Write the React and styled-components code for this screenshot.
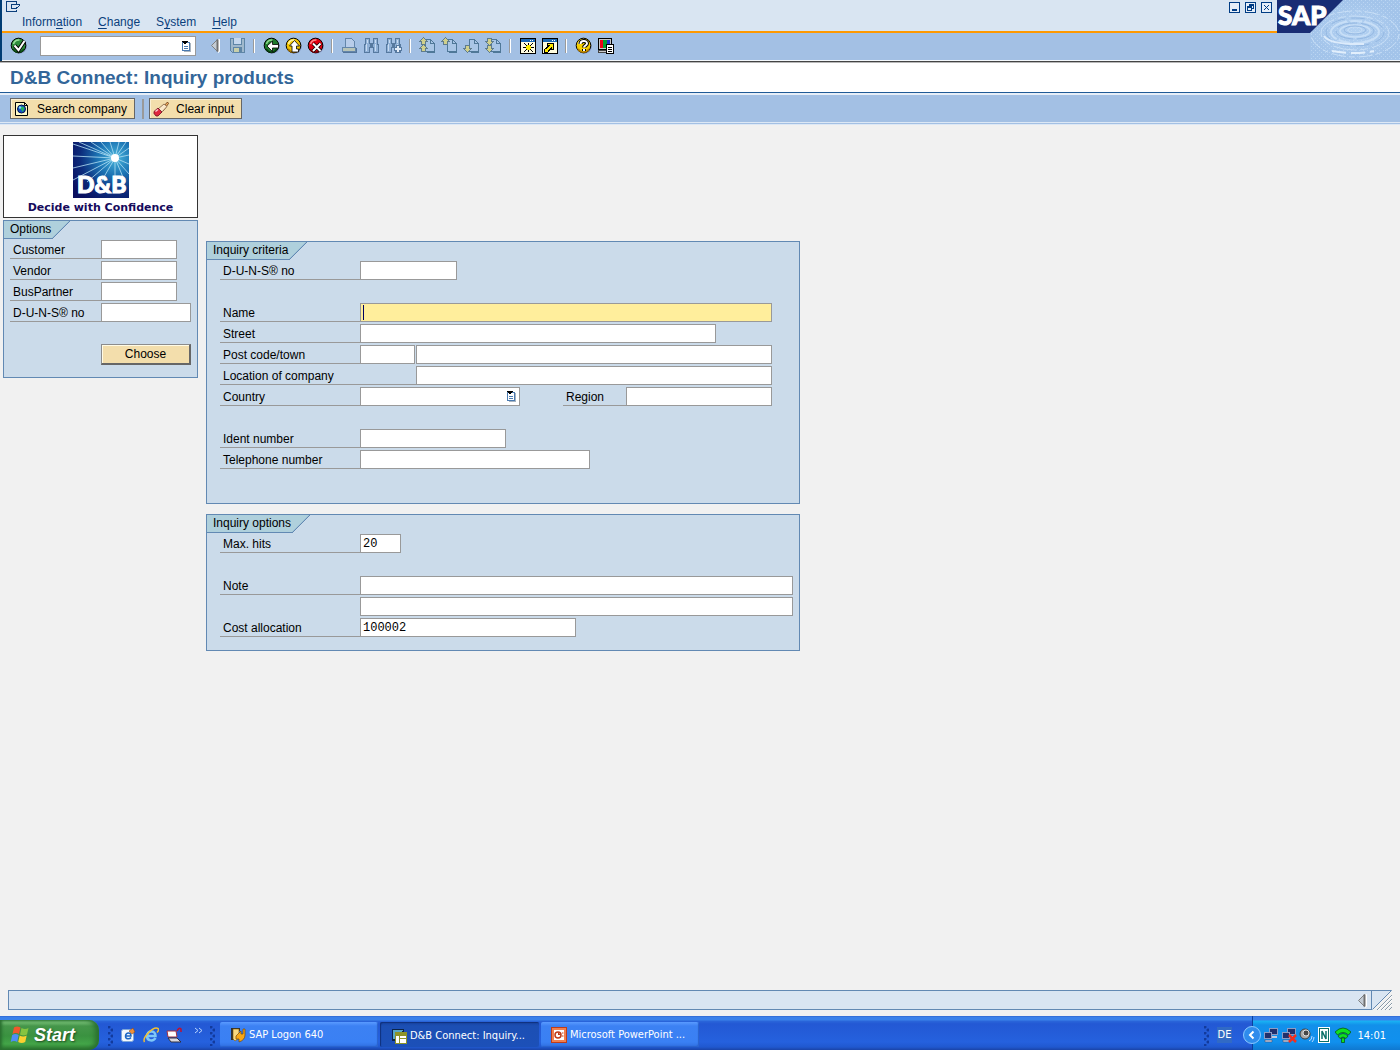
import React from 'react';
import styled, { createGlobalStyle } from 'styled-components';

const GlobalStyle = createGlobalStyle`
  * {
    box-sizing: border-box;
  }

  body {
    margin: 0;
    background-color: #f1f1f1;
  }

  body, button, input, select {
    font-family: "Liberation Sans", Arial, sans-serif;
    font-size: 12px;
    color: #000;
  }
`;

const Screen = styled.div`
  display: flex;
  flex-direction: column;
  min-height: 100vh;
`;

/* ---------- header ---------- */

const Header = styled.header`
  display: flex;
  background-color: #a3c0e4;
  border-bottom: 1px solid #444;
`;

const HeaderMain = styled.div`
  flex: 1;
  min-width: 0;
  border-left: 2px solid #003c74;
`;

const MenuArea = styled.div`
  display: flex;
  justify-content: space-between;
  height: 33px;
  background-color: #d9e5f2;
  border-bottom: 2px solid #ff9900;
`;

const SystemMenu = styled.button`
  display: block;
  margin: 1px 0 0 4px;
  padding: 0;
  border: none;
  background: none;
  height: 12px;

  svg {
    display: block;
  }
`;

const MenuList = styled.ul`
  display: flex;
  gap: 16px;
  list-style: none;
  margin: 1px 0 0;
  padding: 0 0 0 20px;
`;

const MenuLink = styled.a`
  color: #0b3f7c;
  text-decoration: none;
  line-height: 16px;

  u {
    text-underline-offset: 2px;
  }
`;

const WindowButtons = styled.div`
  display: flex;
  gap: 5px;
  padding: 2px 5px 0 0;
`;

const WindowButton = styled.button`
  width: 11px;
  height: 11px;
  padding: 0;
  border: 1px solid #003c84;
  background-color: #e6eef8;

  svg {
    display: block;
  }
`;

const Toolbar = styled.div`
  display: flex;
  align-items: center;
  height: 28px;
  padding: 0 0 2px 5px;
  border-bottom: 1px solid #f4f8fc;
`;

const ToolButton = styled.button`
  display: flex;
  justify-content: center;
  align-items: center;
  flex: none;
  width: 22px;
  height: 22px;
  padding: 0;
  border: none;
  background: none;
`;

const CommandField = styled.div`
  display: flex;
  align-items: center;
  width: 156px;
  height: 20px;
  margin: 0 8px 0 11px;
  background-color: #fff;
  border: 1px solid #999;

  input {
    flex: 1;
    min-width: 0;
    height: 18px;
    border: none;
    background: none;
    outline: none;
  }

  button {
    display: flex;
    padding: 0 3px 0 0;
    border: none;
    background: none;
  }
`;

const ToolDivider = styled.span`
  flex: none;
  width: 2px;
  height: 14px;
  margin: 0 5px;
  background-color: #fff;
  border-left: 1px solid #9a9a9a;
`;

const Brand = styled.div`
  flex: none;
  width: 123px;
  border-bottom: 1px solid #f4f8fc;

  svg {
    display: block;
  }
`;

/* ---------- title and application bar ---------- */

const Title = styled.h1`
  margin: 0;
  padding: 1px 10px 2px;
  height: 31px;
  background-color: #fff;
  border-top: 1px solid #b8b8b8;
  border-bottom: 1px solid #1f5a96;
  color: #336699;
  font-size: 19px;
  line-height: 28px;
`;

const ActionBar = styled.div`
  display: flex;
  align-items: center;
  height: 32px;
  padding: 0 10px;
  background-color: #a3c0e4;
  border-top: 2px solid #e6eef8;
  border-bottom: 3px double #dde8f5;
`;

const ActionButton = styled.button`
  display: flex;
  align-items: center;
  gap: 7px;
  height: 21px;
  padding: 0 7px 0 3px;
  background-color: #f3deac;
  border: 1px solid #666;
  box-shadow: inset 1px 1px 0 #fbf0d4;
`;

const ActionDivider = styled.span`
  width: 2px;
  height: 20px;
  margin: 0 5px 0 7px;
  background-color: #999;
`;

/* ---------- work area ---------- */

const WorkArea = styled.main`
  flex: 1;
  display: flex;
  align-items: flex-start;
  gap: 8px;
  padding: 10px 3px;
`;

const SideColumn = styled.div`
  flex: none;
  display: flex;
  flex-direction: column;
  gap: 2px;
  width: 195px;
`;

const FormColumn = styled.div`
  flex: 0 1 594px;
  min-width: 0;
  display: flex;
  flex-direction: column;
  gap: 10px;
  margin-top: 106px;
`;

const LogoCard = styled.div`
  padding: 6px 0 2px;
  background-color: #fff;
  border: 1px solid #333;
  text-align: center;

  svg {
    display: block;
    margin: 0 auto 3px;
  }
`;

const Slogan = styled.div`
  color: #160a5c;
  font-family: "DejaVu Sans", Verdana, sans-serif;
  font-size: 11px;
  font-weight: bold;
  line-height: 14px;
`;

const Panel = styled.section`
  background-color: #cbdbea;
  border: 1px solid #6289b3;
  padding-bottom: ${(props) => props.$bottom}px;
`;

const PanelTitle = styled.h2`
  position: relative;
  width: fit-content;
  height: 18px;
  margin: 0 0 1px;
  padding: 0 1px 0 6px;
  background-color: #afd0dc;
  border-bottom: 1px solid #6289b3;
  font-size: 12px;
  font-weight: normal;
  line-height: 17px;

  &:after {
    content: '';
    position: absolute;
    left: 100%;
    top: 0;
    width: 18px;
    height: 18px;
    background: linear-gradient(to bottom right, #afd0dc 47%, #6289b3 48%, #6289b3 51%, transparent 52%);
  }
`;

const Rows = styled.div`
  display: flex;
  flex-direction: column;
  gap: 2px;
  padding: 0 6px 0 ${(props) => props.$indent}px;
`;

const Row = styled.div`
  display: flex;
  height: 19px;
`;

const Label = styled.label`
  flex: none;
  width: ${(props) => props.$width}px;
  padding: 1px 0 0 3px;
  border-bottom: 1px solid #999;
  line-height: 18px;
  white-space: nowrap;
`;

const Gap = styled.span`
  flex: none;
  width: ${(props) => props.$width}px;
`;

const Field = styled.input`
  flex: 0 1 ${(props) => props.$width}px;
  width: ${(props) => props.$width}px;
  min-width: 0;
  height: 19px;
  padding: 0 2px;
  border: 1px solid #999;
  border-radius: 0;
  outline: none;
  background: #fff;
  font-family: "Liberation Mono", "Courier New", monospace;
`;

const ActiveField = styled(Field)`
  background: linear-gradient(#000060, #000060) 2px 1px / 1px 15px no-repeat, #ffee9c;
`;

const SelectBox = styled.div`
  position: relative;
  flex: 0 1 160px;
  min-width: 0;

  select {
    display: block;
    width: 100%;
    height: 19px;
    appearance: none;
    background-color: #fff;
    border: 1px solid #999;
    border-radius: 0;
    outline: none;
  }

  svg {
    position: absolute;
    top: 3px;
    right: 3px;
    pointer-events: none;
  }
`;

const ChooseButton = styled.button`
  display: block;
  width: 90px;
  height: 21px;
  margin: 22px 6px 0 auto;
  padding: 0;
  background-color: #f3deac;
  border: 1px solid #8c8c8c;
  border-right: 2px solid #666;
  border-bottom: 2px solid #666;
  box-shadow: inset 1px 1px 0 #fffbe6;
`;

/* ---------- status bar ---------- */

const StatusBar = styled.footer`
  display: flex;
  height: 20px;
  margin: 0 8px 6px;
`;

const StatusText = styled.div`
  flex: 1;
  display: flex;
  justify-content: flex-end;
  align-items: center;
  background-color: #d9e5f2;
  border: 1px solid #6289b3;
`;

/* ---------- taskbar ---------- */

const Taskbar = styled.nav`
  display: flex;
  height: 34px;
  background: linear-gradient(#2d60c8 0, #3b80ea 1px, #3b82ea 4px, #2a66da 5px, #2358d4 8px, #2561de 26px, #2058cf 31px, #1a44a8 34px);
  font-family: "DejaVu Sans Condensed", Tahoma, sans-serif;
  font-size: 11px;
  color: #fff;
`;

const StartButton = styled.button`
  display: flex;
  align-items: center;
  gap: 4px;
  width: 99px;
  height: 30px;
  margin-top: 4px;
  padding: 0 0 0 10px;
  border: none;
  border-radius: 0 10px 10px 0;
  background: linear-gradient(#5fae60 0, #7cc47c 2px, #45964a 6px, #3a9240 16px, #43a548 24px, #2c7430 30px);
  box-shadow: inset -4px 0 5px #2a7030, inset 2px 0 3px #2a7030;
  color: #fff;
  font-size: 18px;
  font-weight: bold;
  font-style: italic;
  text-shadow: 1px 1px 2px #1d4d20;
`;

const Grip = styled.span`
  flex: none;
  width: 5px;
  height: 20px;
  margin: 10px 0 0 ${(props) => props.$left}px;
  background:
    radial-gradient(circle at 1px 1px, #123a9c 1px, transparent 2px) 0 0 / 5px 6px,
    radial-gradient(circle at 4px 4px, #123a9c 1px, transparent 2px) 0 0 / 5px 6px;
`;

const QuickLaunch = styled.div`
  display: flex;
  align-items: center;
  gap: 7px;
  padding: 4px 0 0 7px;
`;

const QuickButton = styled.button`
  display: flex;
  padding: 0;
  border: none;
  background: none;
`;

const More = styled.button`
  align-self: flex-start;
  width: 12px;
  margin: 4px 0 0 4px;
  padding: 0;
  border: none;
  background: none;
`;

const Tasks = styled.div`
  display: flex;
  flex: 0 1 484px;
  min-width: 0;
  gap: 2px;
  padding: 6px 0 3px 5px;
`;

const Task = styled.button`
  flex: 1;
  min-width: 0;
  display: flex;
  align-items: center;
  gap: 3px;
  padding: ${(props) => (props.$active ? '2px 10px 0 11px' : '0 10px')};
  border: none;
  border-radius: 2px;
  background: ${(props) => (props.$active
    ? 'linear-gradient(#1743a0, #1c4fb4 4px, #1c50b8)'
    : 'linear-gradient(#5a9bff, #3c81f3 4px, #3a80f4 20px, #2f6fe0)')};
  box-shadow: ${(props) => (props.$active ? 'inset 1px 1px 1px #10307c' : 'inset -1px -1px 1px #2a62cc')};
  color: #fff;
  font-family: inherit;
  font-size: 11px;
  white-space: nowrap;
`;

const TaskbarEnd = styled.div`
  display: flex;
  margin-left: auto;
`;

const Language = styled.span`
  align-self: center;
  margin: 4px 12px 0 8px;
  padding: 0 1px;
  background-color: #316ac5;
  line-height: 16px;
`;

const Tray = styled.div`
  display: flex;
  align-items: center;
  gap: 2px;
  margin-left: 8px;
  padding: 4px 14px 0 0;
  background: linear-gradient(#2d60c8 0, #3b80ea 1px, #3b82ea 4px, #19b3f3 5px, #1290ea 9px, #1090ee 26px, #0f78d0 34px);
  border-left: 1px solid #0c3f9c;
`;

const TrayToggle = styled.button`
  display: flex;
  margin-left: -10px;
  padding: 0;
  border: none;
  background: none;
`;

const Clock = styled.time`
  margin-left: 4px;
`;

/* ---------- icons ---------- */

const Icon = ({ size = 17, children, ...rest }) => (
  <svg width={size} height={size} viewBox={`0 0 ${size} ${size}`} fill="none" {...rest}>
    {children}
  </svg>
);

const ListIcon = () => (
  <svg width="11" height="12" viewBox="0 0 11 12" shapeRendering="crispEdges">
    <path d="M3 11h6V3h1v9H3z" fill="#a8b4c0" />
    <rect x="1" y="2" width="8" height="9" fill="#4a7ab0" />
    <rect x="2" y="3" width="6" height="7" fill="#fff" />
    <path d="M3 6h4v1H3zM3 8h4v1H3z" fill="#4a7ab0" />
    <path d="M1 1h6v1H6v1H5v1H3V3H2V2H1z" fill="#000" />
  </svg>
);

const Ball = ({ color, light, dark, children }) => (
  <Icon>
    <circle cx="9.500" cy="9.500" r="7.200" fill="#7f8fc0" />
    <circle cx="8.500" cy="8.500" r="7.300" fill={color} stroke="#000" />
    <path d="M3 12a6.500 6.500 0 0 0 11 0" stroke={dark} strokeWidth="1.500" />
    <path d="M3.500 7a5.500 5.500 0 0 1 6-4" stroke={light} strokeWidth="1.500" />
    {children}
  </Icon>
);

const CheckIcon = () => (
  <Ball color="#2e8e3c" light="#9be09b" dark="#0c4c14">
    <path d="M4.500 8.500l4 4.500 6-9" stroke="#000" strokeWidth="4" />
    <path d="M4.500 8.500l4 4.500 6-9" stroke="#fff" strokeWidth="2" />
  </Ball>
);

const BackIcon = () => (
  <Ball color="#1f7a2c" light="#8ed88e" dark="#083c10">
    <path d="M4 9l5.500-5v3.500h6v3.500h-6v3.500z" fill="#fff" stroke="#000" strokeWidth=".8" />
  </Ball>
);

const ExitIcon = () => (
  <Ball color="#f2c400" light="#fff6a0" dark="#a87400">
    <path d="M9.500 3.500l5 5.500h-3v3h2v3H7v-6H4.500z" fill="#fff" stroke="#000" strokeWidth=".8" />
  </Ball>
);

const CancelIcon = () => (
  <Ball color="#e00010" light="#ff8c8c" dark="#800008">
    <path d="M6 6.500l7.500 7.500M13.500 6.500L6 14" stroke="#000" strokeWidth="3.500" />
    <path d="M6 6.500l7.500 7.500M13.500 6.500L6 14" stroke="#fff" strokeWidth="2" />
  </Ball>
);

const HelpIcon = () => (
  <Ball color="#f6d000" light="#fffac0" dark="#b88000">
    <path d="M5.500 7c0-4 6.500-4 6.500-.5 0 2-3 2-3 4M9 12v2" stroke="#000" strokeWidth="4" />
    <path d="M5.500 7c0-4 6.500-4 6.500-.5 0 2-3 2-3 4M9 12v2" stroke="#fff" strokeWidth="2" />
  </Ball>
);

const TriangleIcon = () => (
  <Icon>
    <path d="M11.500 2.500v13l1-1v-12z" fill="#fff" stroke="#fff" />
    <path d="M4.500 8.500l6-6v12z" fill="#c4ccd4" stroke="#808080" />
    <path d="M10.500 2.500v12" stroke="#707070" strokeWidth="2" />
  </Icon>
);

const SaveIcon = () => (
  <Icon shapeRendering="crispEdges">
    <path d="M2 3h14v13H3z" fill="#c7d6e8" />
    <path d="M1 1h15v15H3l-2-2z" fill="#5e85a6" />
    <path d="M2 2h2v6h9V2h2v13H3l-1-1z" fill="#9fb8cc" />
    <rect x="5" y="1" width="7" height="6" fill="#c5d8ee" />
    <rect x="4" y="10" width="9" height="5" fill="#5e85a6" />
    <rect x="5" y="11" width="5" height="4" fill="#c8cfaa" />
  </Icon>
);

const PrintIcon = () => (
  <Icon shapeRendering="crispEdges">
    <path d="M4.500 10.500v-9h6l3 3v6z" fill="#b8cdea" stroke="#6486aa" />
    <path d="M1.500 10.500h13v4h-13z" fill="#b8c4b8" stroke="#6486aa" />
    <path d="M2 15.500h13V11" stroke="#53749a" />
  </Icon>
);

const Binoculars = ({ plus }) => (
  <Icon shapeRendering="crispEdges">
    <path d="M2.500 1.500h4v5h4v-5h4v5l1 2v7h-5v-5h-4v5h-5v-7l1-2z" fill="#8fb0d6" stroke="#56799f" />
    <path d="M3 7h1v7H3zM12 7h1v7h-1zM4 3h1v3H4zM12 3h1v3h-1z" fill="#c8dcf2" />
    <path d="M7 7h3v3H7z" fill="#56799f" />
    {plus && <path d="M11.500 8.500h3v2h2v3h-2v2h-3v-2h-2v-3h2z" fill="#e2ecf8" stroke="#56799f" />}
  </Icon>
);

const PageIcon = ({ up, down, double }) => (
  <Icon shapeRendering="crispEdges">
    <path d="M6.500 2.500h5l4 4v8h-9z" fill="#a9c6e6" stroke="#4f7898" />
    <path d="M11.500 2.500v4h4M8 15.500h8" stroke="#4f7898" />
    {up && <path d="M4.500 .5l4 4h-2v3h-4v-3h-2z" fill="#d0d08c" stroke="#5f7c8c" />}
    {up && double && <path d="M4.500 7.500l4 4h-2v3h-4v-3h-2z" fill="#d0d08c" stroke="#5f7c8c" />}
    {down && <path d="M2.500 8.500h4v3h2l-4 4-4-4h2z" fill="#d0d08c" stroke="#5f7c8c" />}
    {down && double && <path d="M2.500 1.500h4v3h2l-4 4-4-4h2z" fill="#d0d08c" stroke="#5f7c8c" />}
  </Icon>
);

const WindowFrame = ({ children }) => (
  <Icon shapeRendering="crispEdges">
    <rect x="1" y="1" width="16" height="16" fill="#000" />
    <rect x="2" y="2" width="14" height="3" fill="#1c69b4" />
    <path d="M11 3h1v1h-1zM13 3h1v1h-1z" fill="#fff" />
    <rect x="2" y="5" width="14" height="11" fill="#fffde0" />
    {children}
  </Icon>
);

const SessionIcon = () => (
  <WindowFrame>
    <path d="M9.500 6v9M4 10.500h11M5 6l9 9M14 6l-9 9" stroke="#000" />
    <path d="M8 8h3v5H8zM7 9h5v3H7z" fill="#ffee00" />
  </WindowFrame>
);

const ShortcutIcon = () => (
  <WindowFrame>
    <path d="M3.500 15.500v-3l5-4h-2v-2h6v6h-2v-2l-4 5z" fill="#ffe800" stroke="#000" />
  </WindowFrame>
);

const LayoutIcon = () => (
  <Icon shapeRendering="crispEdges">
    <rect x="1" y="1" width="14" height="12" fill="#000" />
    <rect x="2" y="2" width="12" height="10" fill="#c8c8c8" />
    <rect x="3" y="3" width="3" height="8" fill="#f00018" />
    <rect x="6" y="3" width="4" height="8" fill="#00a030" />
    <rect x="10" y="3" width="3" height="8" fill="#2030d0" />
    <path d="M1 13h14v3H1z" fill="#444" />
    <path d="M2 14h8v1H2z" fill="#ccc" />
    <rect x="9" y="7" width="8" height="10" fill="#000" />
    <rect x="10" y="8" width="6" height="8" fill="#fff" />
    <path d="M11 10.500h4M11 12.500h4M11 14.500h4" stroke="#000" />
  </Icon>
);

const SearchCompanyIcon = () => (
  <Icon size={16}>
    <path d="M1.500 1.500h9l3 3v10h-12z" fill="#fffbc8" stroke="#000" />
    <path d="M10.500 1.500v3h3" stroke="#000" />
    <circle cx="7.500" cy="8" r="4" fill="#1550c8" stroke="#001050" />
    <path d="M7 5.500l3 .5.500 2-2 3-1-2-1-1z" fill="#20b060" />
    <circle cx="6" cy="6.500" r="1.200" fill="#7fe0ff" />
  </Icon>
);

const EraserIcon = () => (
  <Icon size={16}>
    <path d="M9 7l5.500-6 1 1.500L10 10z" fill="#f8b060" stroke="#5a3010" strokeWidth=".8" />
    <path d="M5 8l6-5 3 2.500L8 12z" fill="#fbe8c8" stroke="#806040" strokeWidth=".8" />
    <path d="M1 10.500l4-3.500L9 11l-4 4H3L1 12.500z" fill="#e02840" stroke="#701020" strokeWidth=".8" />
    <path d="M2.500 10.500L5 8.500" stroke="#ffd0d8" strokeWidth="1.500" />
  </Icon>
);

const BrandArt = () => (
  <svg width="123" height="60" viewBox="0 0 123 60">
    <defs>
      <pattern id="grain" width="4" height="4" patternUnits="userSpaceOnUse">
        <rect width="1" height="1" fill="#c4dcf6" />
        <rect x="2" y="2" width="1" height="1" fill="#c4dcf6" />
      </pattern>
      <radialGradient id="pool">
        <stop offset="0" stopColor="#b4d2f2" />
        <stop offset="1" stopColor="#a3c4ea" />
      </radialGradient>
    </defs>
    <path d="M66 0h57v60H33V33z" fill="url(#pool)" />
    <path d="M66 0h57v60H33V33z" fill="url(#grain)" opacity=".7" />
    <g fill="none" stroke="#c8dff7">
      <ellipse cx="78" cy="30" rx="7" ry="3" />
      <ellipse cx="78" cy="31" rx="15" ry="6" strokeWidth="1.500" />
      <ellipse cx="78" cy="32" rx="24" ry="11" strokeWidth="2" strokeDasharray="30 3 12 2" />
      <ellipse cx="78" cy="33" rx="34" ry="17" strokeDasharray="24 4 8 3" />
      <ellipse cx="78" cy="34" rx="44" ry="23" strokeDasharray="6 3 14 4" />
    </g>
    <g fill="none" stroke="#94b8e2">
      <ellipse cx="78" cy="30" rx="11" ry="4" />
      <ellipse cx="78" cy="31" rx="19" ry="8" strokeDasharray="20 4" />
      <ellipse cx="78" cy="32" rx="29" ry="14" strokeDasharray="14 6" />
    </g>
    <path d="M47 36q6 9 40 8" stroke="#dcebfb" strokeWidth="2" fill="none" />
    <path d="M55 51q22 4 42 0" stroke="#e2effc" strokeWidth="2" fill="none" strokeDasharray="14 5" />
    <path d="M0 0h66L33 33H0z" fill="#182c74" />
    <text x="1" y="25" fill="#fff" stroke="#fff" strokeWidth="1" fontFamily="Lato, Liberation Sans, sans-serif" fontSize="26" fontWeight="900">SAP</text>
  </svg>
);

const rays = [
  [0, 2], [0, 14], [0, 26], [0, 38], [6, 0], [18, 0], [28, 0], [37, 0], [46, 0], [53, 0],
  [56, 6], [56, 13], [56, 22], [56, 32], [14, 40], [28, 40], [42, 40], [52, 40],
];

const CompanyLogo = () => (
  <svg width="56" height="56" viewBox="0 0 56 56">
    <defs>
      <radialGradient id="glow" cx=".76" cy=".28" r=".9">
        <stop offset="0" stopColor="#4ab6dc" />
        <stop offset=".35" stopColor="#1c74b4" />
        <stop offset=".7" stopColor="#0c2c7c" />
        <stop offset="1" stopColor="#0a1060" />
      </radialGradient>
    </defs>
    <rect width="56" height="56" fill="url(#glow)" />
    {rays.map(([x, y]) => (
      <path key={`${x}-${y}`} d={`M42 16L${x} ${y}`} stroke="#b4e0f4" strokeWidth=".8" />
    ))}
    <circle cx="42" cy="16" r="4" fill="#fff" />
    <text x="4" y="51" fill="#fff" stroke="#fff" fontFamily="Lato, Liberation Sans, sans-serif" fontSize="23" fontWeight="900">D&amp;B</text>
  </svg>
);

const StatusGrip = () => (
  <svg width="20" height="20" viewBox="0 0 20 20">
    <path d="M0 0h19L1 19H0z" fill="#d9e5f2" />
    <path d="M0 .5h19.500M.5 19.500L19.500 .5" stroke="#6289b3" fill="none" />
    <path d="M5 20L20 5M9 20L20 9M13 20l7-7M17 20l3-3" stroke="#8a9aa8" />
    <path d="M6 20L20 6M10 20L20 10M14 20l6-6" stroke="#fff" />
  </svg>
);

const WindowsFlag = () => (
  <svg width="20" height="20" viewBox="0 0 20 20">
    <path d="M4 2.500q3-2 6.500 0L9 9q-3-2-6.500 0z" fill="#f0582c" />
    <path d="M11.500 3q3.500 2 7 0L17 9.500q-3.500 2-7 0z" fill="#86c440" />
    <path d="M2.200 10q3-2 6.500 0L7.200 17q-3-2-6.500 0z" fill="#4f8ef4" />
    <path d="M9.700 10.500q3.500 2 7 0L15.200 17q-3.500 2-7 0z" fill="#fbd030" />
  </svg>
);

const OutlookIcon = () => (
  <Icon size={16}>
    <rect x="1.500" y="2.500" width="12" height="12" rx="2" fill="#f4f8fc" stroke="#7fa6d8" />
    <path d="M5 9h6c0-4-5-4-5.500 0 0 3.500 4 3.500 5.500 1.500" stroke="#1c66c4" strokeWidth="1.500" />
    <path d="M9 4l4-3 2 4-3 2z" fill="#f09038" stroke="#803c10" strokeWidth=".5" />
  </Icon>
);

const ExplorerIcon = () => (
  <Icon size={16}>
    <path d="M4 9h8.500c0-6-8-6-8.500 0 0 5.500 6.500 5.500 8.500 2" stroke="#7fc8f8" strokeWidth="2.500" />
    <path d="M1.500 15C-1 11 10-1 15 1.500c1 1 0 3-1 4" stroke="#f4c030" strokeWidth="1.500" />
  </Icon>
);

const DesktopIcon = () => (
  <Icon size={16}>
    <path d="M1 4h9l1 6H2z" fill="#fff" stroke="#a03040" />
    <path d="M2 11h9l4 4H5z" fill="#d8d8e0" stroke="#303040" />
    <path d="M11 4q2-4 4-2v3" stroke="#c01030" strokeWidth="1.500" />
  </Icon>
);

const MoreIcon = () => (
  <svg width="10" height="8" viewBox="0 0 10 8" fill="none" stroke="#b8d4ff">
    <path d="M1 1l3 2.500L1 6M5 1l3 2.500L5 6" />
  </svg>
);

const LogonIcon = () => (
  <Icon size={16}>
    <path d="M1 1h9v3H5v9H1z" fill="#303030" />
    <path d="M3 2h6v9l-4 3-2-2z" fill="#f8d880" stroke="#7a5000" strokeWidth=".6" />
    <path d="M6 9l5-5v3h2V2h2v6q0 5-6 7v-3H6z" fill="#f8a818" stroke="#7a4800" strokeWidth=".7" />
  </Icon>
);

const SapWindowIcon = () => (
  <Icon size={16} shapeRendering="crispEdges">
    <path d="M1 1h12v3H4v9H1z" fill="#0c2448" />
    <path d="M2 2h10l-9 9H2z" fill="#58a8c8" />
    <rect x="4" y="4" width="12" height="12" fill="#8c9428" />
    <path d="M5 8h3v7H5zM9 8h6v2H9zM9 11h6v4H9z" fill="#fff" />
  </Icon>
);

const PowerPointIcon = () => (
  <Icon size={16}>
    <rect x=".5" y=".5" width="15" height="15" fill="#f08050" stroke="#c03c18" />
    <rect x="3" y="3" width="10" height="10" fill="#fff" />
    <circle cx="7" cy="8" r="3" stroke="#c03c18" strokeWidth="1.500" />
    <path d="M7 8V5l3 3z" fill="#c03c18" />
    <path d="M11 6h1.500M11 9h1.500" stroke="#c03c18" />
  </Icon>
);

const NetworkIcon = ({ off }) => (
  <Icon size={16}>
    <rect x="6.500" y="1.500" width="8" height="6" fill="#20306c" stroke="#8c9cc4" />
    <path d="M8 9h6v2H8z" fill="#c0c8dc" />
    <rect x="1.500" y="5.500" width="7" height="6" fill="#20306c" stroke="#8c9cc4" />
    <path d="M2 13h7v2H2z" fill="#c0c8dc" stroke="#404868" strokeWidth=".5" />
    {off && <path d="M8 8l7 7M15 8l-7 7" stroke="#f03020" strokeWidth="2.500" />}
  </Icon>
);

const SoundIcon = () => (
  <Icon size={16}>
    <circle cx="6" cy="7" r="5" fill="#a8a8a8" stroke="#404040" />
    <circle cx="7" cy="6" r="3" fill="#484848" stroke="#e0e0e0" />
    <path d="M10 14q3-1 3-5M13 15q2-2 2-5" stroke="#b8d8ff" />
  </Icon>
);

const NIcon = () => (
  <Icon size={16}>
    <rect x="1" width="12" height="16" fill="#fff" />
    <rect x="2.500" y="1.500" width="9" height="13" fill="#fff" stroke="#0c7068" />
    <path d="M5 12V4l4 8V4" stroke="#0c7068" strokeWidth="1.500" />
  </Icon>
);

const WifiIcon = () => (
  <Icon size={16}>
    <path d="M0 5q8-8 16 0l-2.500 3Q8 3 2.500 8z" fill="#10e020" stroke="#064c08" strokeWidth=".7" />
    <path d="M3 9q5-5 10 0l-2 2.500q-3-3-6 0z" fill="#10e020" stroke="#064c08" strokeWidth=".7" />
    <path d="M6.500 11h3v4.500h-3z" fill="#10e020" stroke="#064c08" strokeWidth=".7" />
  </Icon>
);

const toolGroups = [
  [
    { name: 'Previous', icon: <TriangleIcon /> },
    { name: 'Save', icon: <SaveIcon /> },
  ],
  [
    { name: 'Back', icon: <BackIcon /> },
    { name: 'Exit', icon: <ExitIcon /> },
    { name: 'Cancel', icon: <CancelIcon /> },
  ],
  [
    { name: 'Print', icon: <PrintIcon /> },
    { name: 'Find', icon: <Binoculars /> },
    { name: 'Find next', icon: <Binoculars plus /> },
  ],
  [
    { name: 'First page', icon: <PageIcon up double /> },
    { name: 'Previous page', icon: <PageIcon up /> },
    { name: 'Next page', icon: <PageIcon down /> },
    { name: 'Last page', icon: <PageIcon down double /> },
  ],
  [
    { name: 'New session', icon: <SessionIcon /> },
    { name: 'Create shortcut', icon: <ShortcutIcon /> },
  ],
  [
    { name: 'Help', icon: <HelpIcon /> },
    { name: 'Layout', icon: <LayoutIcon /> },
  ],
];

const optionFields = [
  { id: 'customer', label: 'Customer', width: 76 },
  { id: 'vendor', label: 'Vendor', width: 76 },
  { id: 'partner', label: 'BusPartner', width: 76 },
  { id: 'duns', label: 'D-U-N-S® no', width: 90 },
];

const AppHeader = () => (
  <Header>
    <HeaderMain>
      <MenuArea>
        <div>
          <SystemMenu aria-label="Window menu">
            <svg width="15" height="12" viewBox="0 0 15 12" fill="none" stroke="#0b3f7c" shapeRendering="crispEdges">
              <path d="M10.500 3v-2.500h-10v10h10v-2" />
              <path d="M13.500 3.500h-8v4h5v-1h1l2-2z" />
            </svg>
          </SystemMenu>
          <MenuList>
            <li><MenuLink href="#information">Inform<u>a</u>tion</MenuLink></li>
            <li><MenuLink href="#change"><u>C</u>hange</MenuLink></li>
            <li><MenuLink href="#system">S<u>y</u>stem</MenuLink></li>
            <li><MenuLink href="#help"><u>H</u>elp</MenuLink></li>
          </MenuList>
        </div>
        <WindowButtons>
          <WindowButton aria-label="Minimize">
            <svg width="9" height="9"><path d="M2 6h5v2H2z" fill="#003c84" /></svg>
          </WindowButton>
          <WindowButton aria-label="Restore">
            <svg width="9" height="9" fill="none" stroke="#003c84" shapeRendering="crispEdges">
              <path d="M3.500 3.500v-2h4v4h-2M3 2h5M1.500 3.500h4v4h-4zM1 4h5" />
            </svg>
          </WindowButton>
          <WindowButton aria-label="Close">
            <svg width="9" height="9"><path d="M2 2l5 5M7 2L2 7" stroke="#003c84" /></svg>
          </WindowButton>
        </WindowButtons>
      </MenuArea>
      <Toolbar>
        <ToolButton aria-label="Enter"><CheckIcon /></ToolButton>
        <CommandField>
          <input type="text" aria-label="Command" />
          <button aria-label="Command history"><ListIcon /></button>
        </CommandField>
        {toolGroups.map((group, index) => (
          <React.Fragment key={index}>
            {index > 0 && <ToolDivider />}
            {group.map((tool) => (
              <ToolButton key={tool.name} aria-label={tool.name}>{tool.icon}</ToolButton>
            ))}
          </React.Fragment>
        ))}
      </Toolbar>
    </HeaderMain>
    <Brand><BrandArt /></Brand>
  </Header>
);

const OptionsPanel = () => (
  <Panel $bottom={12}>
    <PanelTitle>Options</PanelTitle>
    <Rows $indent={6}>
      {optionFields.map((field) => (
        <Row key={field.id}>
          <Label htmlFor={field.id} $width={91}>{field.label}</Label>
          <Field id={field.id} $width={field.width} />
        </Row>
      ))}
    </Rows>
    <ChooseButton>Choose</ChooseButton>
  </Panel>
);

const CriteriaPanel = () => (
  <Panel $bottom={34}>
    <PanelTitle>Inquiry criteria</PanelTitle>
    <Rows $indent={13}>
      <Row>
        <Label htmlFor="inquiry-duns" $width={140}>D-U-N-S® no</Label>
        <Field id="inquiry-duns" $width={97} />
      </Row>
      <Row />
      <Row>
        <Label htmlFor="name" $width={140}>Name</Label>
        <ActiveField id="name" $width={412} />
      </Row>
      <Row>
        <Label htmlFor="street" $width={140}>Street</Label>
        <Field id="street" $width={356} />
      </Row>
      <Row>
        <Label id="town-label" htmlFor="postcode" $width={140}>Post code/town</Label>
        <Field id="postcode" $width={55} />
        <Gap $width={1} />
        <Field aria-labelledby="town-label" $width={356} />
      </Row>
      <Row>
        <Label htmlFor="location" $width={196}>Location of company</Label>
        <Field id="location" $width={356} />
      </Row>
      <Row>
        <Label htmlFor="country" $width={140}>Country</Label>
        <SelectBox>
          <select id="country" defaultValue=""><option value="" /></select>
          <ListIcon />
        </SelectBox>
        <Gap $width={43} />
        <Label htmlFor="region" $width={63}>Region</Label>
        <Field id="region" $width={146} />
      </Row>
      <Row />
      <Row>
        <Label htmlFor="ident" $width={140}>Ident number</Label>
        <Field id="ident" $width={146} />
      </Row>
      <Row>
        <Label htmlFor="telephone" $width={140}>Telephone number</Label>
        <Field id="telephone" $width={230} />
      </Row>
    </Rows>
  </Panel>
);

const InquiryOptionsPanel = () => (
  <Panel $bottom={13}>
    <PanelTitle>Inquiry options</PanelTitle>
    <Rows $indent={13}>
      <Row>
        <Label htmlFor="hits" $width={140}>Max. hits</Label>
        <Field id="hits" $width={41} defaultValue="20" />
      </Row>
      <Row />
      <Row>
        <Label id="note-label" htmlFor="note" $width={140}>Note</Label>
        <Field id="note" $width={433} />
      </Row>
      <Row>
        <Gap $width={140} />
        <Field aria-labelledby="note-label" $width={433} />
      </Row>
      <Row>
        <Label htmlFor="cost" $width={140}>Cost allocation</Label>
        <Field id="cost" $width={216} defaultValue="100002" />
      </Row>
    </Rows>
  </Panel>
);

const DesktopTaskbar = () => (
  <Taskbar>
    <StartButton><WindowsFlag />Start</StartButton>
    <Grip $left={9} />
    <QuickLaunch>
      <QuickButton aria-label="Outlook"><OutlookIcon /></QuickButton>
      <QuickButton aria-label="Internet Explorer"><ExplorerIcon /></QuickButton>
      <QuickButton aria-label="Show desktop"><DesktopIcon /></QuickButton>
      <More aria-label="More"><MoreIcon /></More>
    </QuickLaunch>
    <Grip $left={5} />
    <Tasks>
      <Task><LogonIcon />SAP Logon 640</Task>
      <Task $active><SapWindowIcon />D&amp;B Connect: Inquiry...</Task>
      <Task><PowerPointIcon />Microsoft PowerPoint ...</Task>
    </Tasks>
    <TaskbarEnd>
      <Grip $left={0} />
      <Language>DE</Language>
      <Tray>
        <TrayToggle aria-label="Show hidden icons">
          <svg width="18" height="18" viewBox="0 0 18 18">
            <circle cx="9" cy="9" r="8.500" fill="#2f8cec" stroke="#8cc8ff" />
            <path d="M10.500 5.500L7 9l3.500 3.500" stroke="#fff" strokeWidth="2" fill="none" />
          </svg>
        </TrayToggle>
        <NetworkIcon />
        <NetworkIcon off />
        <SoundIcon />
        <NIcon />
        <WifiIcon />
        <Clock>14:01</Clock>
      </Tray>
    </TaskbarEnd>
  </Taskbar>
);

const App = () => (
  <Screen>
    <GlobalStyle />
    <AppHeader />
    <Title>D&amp;B Connect: Inquiry products</Title>
    <ActionBar>
      <ActionButton><SearchCompanyIcon />Search company</ActionButton>
      <ActionDivider />
      <ActionButton><EraserIcon />Clear input</ActionButton>
    </ActionBar>
    <WorkArea>
      <SideColumn>
        <LogoCard>
          <CompanyLogo />
          <Slogan>Decide with Confidence</Slogan>
        </LogoCard>
        <OptionsPanel />
      </SideColumn>
      <FormColumn>
        <CriteriaPanel />
        <InquiryOptionsPanel />
      </FormColumn>
    </WorkArea>
    <StatusBar>
      <StatusText>
        <TriangleIcon />
      </StatusText>
      <StatusGrip />
    </StatusBar>
    <DesktopTaskbar />
  </Screen>
);

export default App;
